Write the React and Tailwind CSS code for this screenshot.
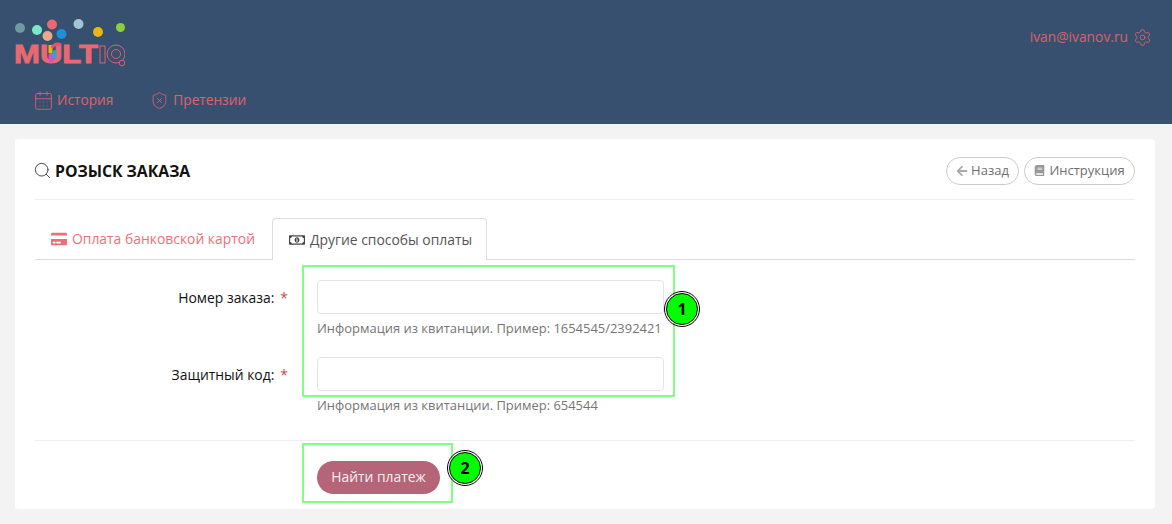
import React from 'react';
import { CalendarDays, ShieldX, Settings, Search } from 'lucide-react';
import { FaArrowLeft, FaBook, FaCreditCard, FaRegMoneyBillAlt } from 'react-icons/fa';

function Logo() {
  return (
    <svg width="125" height="58" viewBox="0 0 125 58" className="block">
      <circle cx="20" cy="18" r="5" fill="#6f9a9e" />
      <circle cx="37" cy="20" r="5" fill="#7ae8c8" />
      <circle cx="52" cy="14.500" r="5" fill="#e8696f" />
      <circle cx="47.500" cy="26" r="5" fill="#eaa98a" />
      <circle cx="61.500" cy="24" r="5" fill="#1c90d8" />
      <circle cx="78.500" cy="14" r="5" fill="#a3c6d2" />
      <circle cx="98" cy="22" r="5" fill="#e9b80c" />
      <text x="14" y="53" fontFamily="'Liberation Sans', sans-serif" fontWeight="700" fontSize="25" fill="#e8696f" stroke="#e8696f" strokeWidth="0.8" textLength="84" lengthAdjust="spacingAndGlyphs">MULT</text>
      <rect x="48.500" y="35" width="4" height="8" fill="#e9b80c" />
      <rect x="48.500" y="43" width="5" height="9" rx="2" fill="#d84fc8" />
      <path d="M52 38a6 6 0 0 1 9-3" stroke="#ef4f63" strokeWidth="3" fill="none" />
      <rect x="52.500" y="40" width="4" height="9" rx="2" fill="#2aa5e8" />
      <rect x="100" y="36" width="5" height="17" fill="none" stroke="#d9636c" strokeWidth="1" />
      <circle cx="116" cy="44" r="9" fill="none" stroke="#d9636c" strokeWidth="1" />
      <circle cx="116" cy="44" r="4.500" fill="none" stroke="#d9636c" strokeWidth="1" />
      <circle cx="122" cy="53" r="2.800" fill="#37506f" stroke="#d9636c" strokeWidth="1" />
      <circle cx="120.500" cy="17.500" r="4.500" fill="#8ccf3c" />
    </svg>
  );
}

function Badge({ children, className }) {
  return (
    <div className={`absolute w-8 h-8 rounded-full bg-[#00ff00] border border-black outline-1 outline-offset-1 outline-black flex items-center justify-center text-black font-bold text-base ${className}`}>
      {children}
    </div>
  );
}

function FormRow({ label, hint, className }) {
  return (
    <div className={`flex ${className}`}>
      <div className="w-[253px] pt-[8px] flex justify-end text-[13.9px] text-[#111] leading-5">
        {label}:<span className="text-[#cf4a4a] ml-[6px]">*</span>
      </div>
      <div className="ml-[29px] w-[347px]">
        <div className="h-[34px] border border-[#e4e4e4] rounded bg-white"></div>
        <div className="mt-[4px] text-[12.95px] leading-5 text-[#757575] whitespace-nowrap">{hint}</div>
      </div>
    </div>
  );
}

export default function App() {
  return (
    <div className="relative h-[524px] overflow-hidden bg-[#f3f3f3] font-['Open_Sans',sans-serif]">
      <header className="h-[124px] bg-[#37506f] pr-[20px]">
        <div className="flex justify-between">
          <div className="pt-[10px]"><Logo /></div>
          <div className="flex items-center gap-[5px] h-[75px] text-[13.8px] text-[#d9606b]">
            ivan@ivanov.ru
            <Settings size={19} strokeWidth={1.2} />
          </div>
        </div>
        <nav className="flex gap-[37px] pl-[33px] pt-[15px] text-[13.7px] text-[#e0606c]">
          <div className="flex items-center gap-[3px] h-5"><CalendarDays size={21} strokeWidth={1} />История</div>
          <div className="flex items-center gap-[4px] h-5"><ShieldX size={19} strokeWidth={1.1} />Претензии</div>
        </nav>
      </header>

      <main className="ml-[15px] mr-[17px] mt-[15px] h-[370px] bg-white rounded px-5">
        <div className="h-[61px] flex items-center justify-between border-b border-[#eeeeee] pt-[3px]">
          <div className="flex items-center gap-[3px] text-[#111]">
            <Search size={19} strokeWidth={1.1} className="text-[#333] -ml-[2px]" />
            <h1 className="text-[15.75px] font-bold leading-6">РОЗЫСК ЗАКАЗА</h1>
          </div>
          <div className="flex gap-[5px] text-[13px] text-[#6f6f6f]">
            <button className="h-7 w-[73px] border border-[#cccccc] rounded-full flex items-center justify-center gap-[3px]">
              <FaArrowLeft size={12} className="text-[#aaaaaa]" />Назад
            </button>
            <button className="h-7 w-[111px] border border-[#cccccc] rounded-full flex items-center justify-center gap-[4px]">
              <FaBook size={11} className="text-[#999999]" />Инструкция
            </button>
          </div>
        </div>

        <div className="mt-[18px] h-[42px] flex border-b border-[#dddddd] text-[13.9px]">
          <div className="w-[237px] pl-4 pt-[1px] flex items-center gap-[5px] text-[#ef6f78]">
            <FaCreditCard size={16} />Оплата банковской картой
          </div>
          <div className="w-[215px] h-[42px] pl-4 pt-[1px] bg-white border border-b-0 border-[#dddddd] rounded-t flex items-center gap-[5px] text-[#555555]">
            <FaRegMoneyBillAlt size={16} className="text-[#444444]" />Другие способы оплаты
          </div>
        </div>

        <FormRow className="mt-[20px]" label="Номер заказа" hint="Информация из квитанции. Пример: 1654545/2392421" />
        <FormRow className="mt-[19px]" label="Защитный код" hint="Информация из квитанции. Пример: 654544" />

        <div className="mt-[25px] border-t border-[#eeeeee] pt-[20px] pl-[282px]">
          <button className="h-[33px] w-[123px] rounded-full bg-[#b66477] text-[#f5f0f2] text-[13.9px]">Найти платеж</button>
        </div>
      </main>

      <div className="absolute left-[302px] top-[265px] w-[373px] h-[132px] border-2 border-[#80ff80]"></div>
      <div className="absolute left-[302px] top-[443px] w-[151px] h-[60px] border-2 border-[#80ff80]"></div>
      <Badge className="left-[666px] top-[293px]">1</Badge>
      <Badge className="left-[449px] top-[452px]">2</Badge>
    </div>
  );
}
